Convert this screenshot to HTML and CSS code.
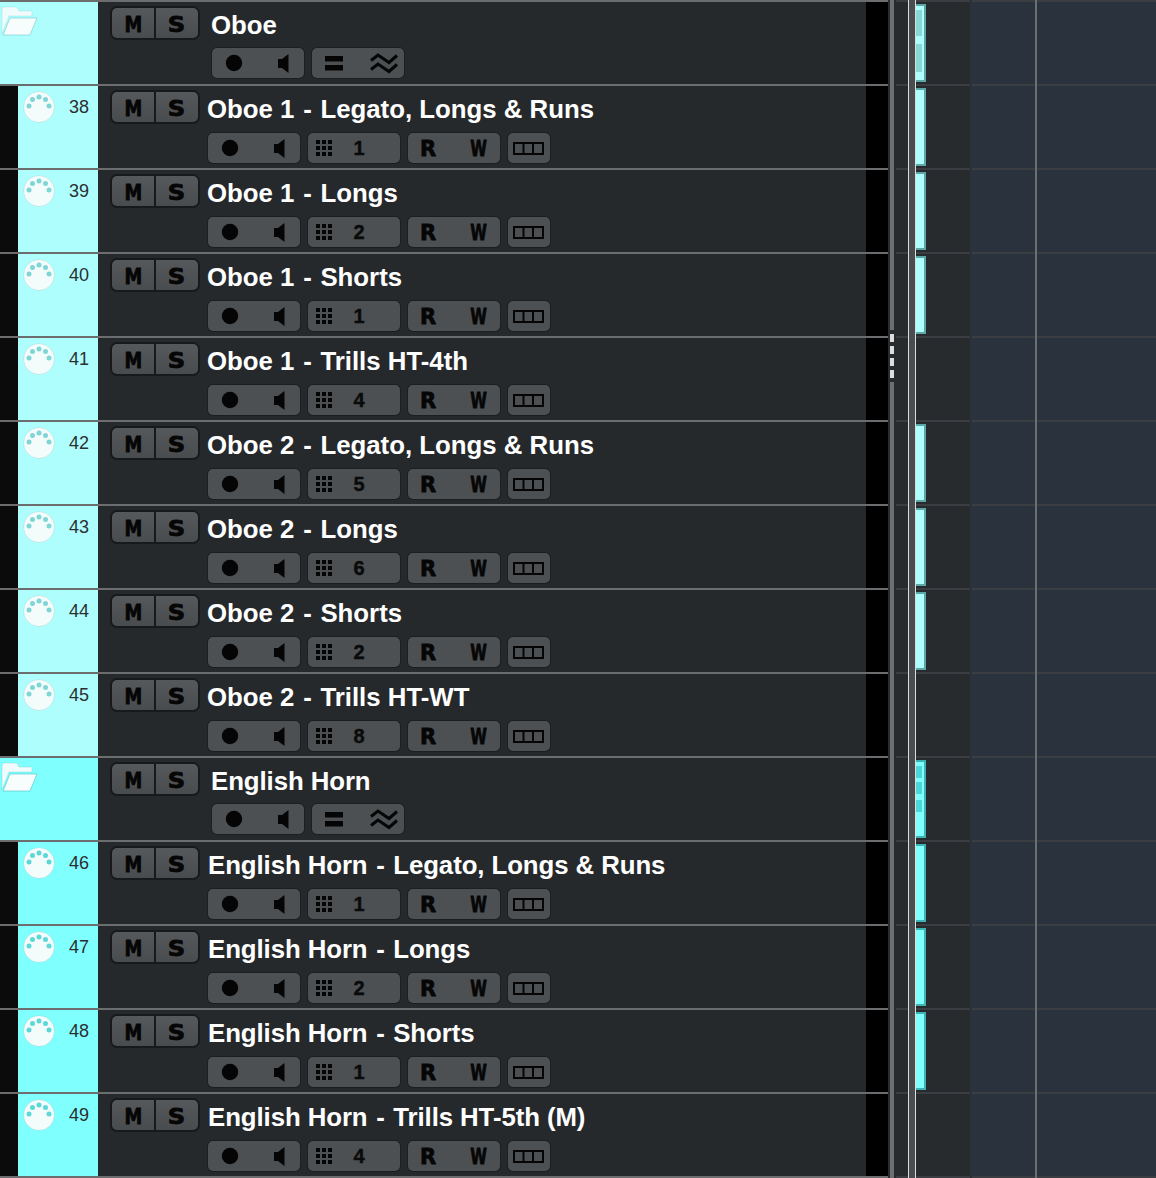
FILE: index.html
```html
<!DOCTYPE html>
<html lang="en">
<head>
    <meta charset="UTF-8">
    <title>Tracks</title>
    <link rel="stylesheet" href="styles.css">
</head>
<body>
    <svg class="icon-defs" width="0" height="0">
        <symbol id="i-rec" viewBox="0 0 18 18"><circle cx="9" cy="9" r="8.2"/></symbol>
        <symbol id="i-spk" viewBox="0 0 11 19"><path d="M0 5h4l6.500-5v19l-6.500-5H0z"/></symbol>
        <symbol id="i-grid" viewBox="0 0 16 16"><path d="M0 0h4v4H0zM6 0h4v4H6zM12 0h4v4h-4zM0 6h4v4H0zM6 6h4v4H6zM12 6h4v4h-4zM0 12h4v4H0zM6 12h4v4H6zM12 12h4v4h-4z"/></symbol>
        <symbol id="i-bars" viewBox="0 0 18 15"><path d="M0 0h18v5.500H0zM0 9h18v5.500H0z"/></symbol>
        <symbol id="i-wave" viewBox="0 0 28 22"><path class="wave" d="M1 8.500 8 3l11 7.500L27 3.500M1 17.500 8 12l11 7.500 8-7"/></symbol>
        <symbol id="i-cells" viewBox="0 0 31 13"><path class="cells" d="M1 1h29v11H1zM10.500 1v11M20 1v11"/></symbol>
        <symbol id="i-folder" viewBox="0 6 40 32">
            <path class="folder-back" d="M3 7h14l2 4h13v5H9L2 34V10z"/>
            <path class="folder-front" d="M10 18h27l-7 17H3z"/>
        </symbol>
        <symbol id="i-midi" viewBox="0 0 32 32">
            <circle class="midi-body" cx="16" cy="16" r="15.500"/>
            <circle class="midi-pin" cx="6" cy="15" r="2.500"/>
            <circle class="midi-pin" cx="9.500" cy="8.500" r="2.500"/>
            <circle class="midi-pin" cx="16" cy="6" r="2.500"/>
            <circle class="midi-pin" cx="22.500" cy="8.500" r="2.500"/>
            <circle class="midi-pin" cx="26" cy="15" r="2.500"/>
        </symbol>
    </svg>

    <div class="page">
        <div class="tracks">
            <!-- Oboe folder -->
            <div class="track folder pale">
                <div class="tint"><svg class="folder-icon"><use href="#i-folder"/></svg></div>
                <div class="controls">
                    <div class="top"><div class="ms"><span class="ms-btn"><b>M</b></span><span class="ms-btn"><b>S</b></span></div><div class="name">Oboe</div></div>
                    <div class="bottom"><div class="btn"><svg class="rec"><use href="#i-rec"/></svg><svg class="spk"><use href="#i-spk"/></svg></div><div class="btn"><svg class="bars"><use href="#i-bars"/></svg><svg class="wv"><use href="#i-wave"/></svg></div></div>
                </div>
                <div class="gutter"></div>
            </div>

            <div class="track pale">
                <div class="indent"></div>
                <div class="tint"><svg class="midi"><use href="#i-midi"/></svg><span class="num">38</span></div>
                <div class="controls">
                    <div class="top"><div class="ms"><span class="ms-btn"><b>M</b></span><span class="ms-btn"><b>S</b></span></div><div class="name">Oboe 1 <span class="dash">-</span> Legato, Longs &amp; Runs</div></div>
                    <div class="bottom"><div class="btn"><svg class="rec"><use href="#i-rec"/></svg><svg class="spk"><use href="#i-spk"/></svg></div><div class="btn chan"><svg class="grid"><use href="#i-grid"/></svg><span class="chan-no">1</span></div><div class="btn rw"><b>R</b><b>W</b></div><div class="btn small"><svg class="cells-icon"><use href="#i-cells"/></svg></div></div>
                </div>
                <div class="gutter"></div>
            </div>
            <div class="track pale">
                <div class="indent"></div>
                <div class="tint"><svg class="midi"><use href="#i-midi"/></svg><span class="num">39</span></div>
                <div class="controls">
                    <div class="top"><div class="ms"><span class="ms-btn"><b>M</b></span><span class="ms-btn"><b>S</b></span></div><div class="name">Oboe 1 <span class="dash">-</span> Longs</div></div>
                    <div class="bottom"><div class="btn"><svg class="rec"><use href="#i-rec"/></svg><svg class="spk"><use href="#i-spk"/></svg></div><div class="btn chan"><svg class="grid"><use href="#i-grid"/></svg><span class="chan-no">2</span></div><div class="btn rw"><b>R</b><b>W</b></div><div class="btn small"><svg class="cells-icon"><use href="#i-cells"/></svg></div></div>
                </div>
                <div class="gutter"></div>
            </div>
            <div class="track pale">
                <div class="indent"></div>
                <div class="tint"><svg class="midi"><use href="#i-midi"/></svg><span class="num">40</span></div>
                <div class="controls">
                    <div class="top"><div class="ms"><span class="ms-btn"><b>M</b></span><span class="ms-btn"><b>S</b></span></div><div class="name">Oboe 1 <span class="dash">-</span> Shorts</div></div>
                    <div class="bottom"><div class="btn"><svg class="rec"><use href="#i-rec"/></svg><svg class="spk"><use href="#i-spk"/></svg></div><div class="btn chan"><svg class="grid"><use href="#i-grid"/></svg><span class="chan-no">1</span></div><div class="btn rw"><b>R</b><b>W</b></div><div class="btn small"><svg class="cells-icon"><use href="#i-cells"/></svg></div></div>
                </div>
                <div class="gutter"></div>
            </div>
            <div class="track pale">
                <div class="indent"></div>
                <div class="tint"><svg class="midi"><use href="#i-midi"/></svg><span class="num">41</span></div>
                <div class="controls">
                    <div class="top"><div class="ms"><span class="ms-btn"><b>M</b></span><span class="ms-btn"><b>S</b></span></div><div class="name">Oboe 1 <span class="dash">-</span> Trills HT-4th</div></div>
                    <div class="bottom"><div class="btn"><svg class="rec"><use href="#i-rec"/></svg><svg class="spk"><use href="#i-spk"/></svg></div><div class="btn chan"><svg class="grid"><use href="#i-grid"/></svg><span class="chan-no">4</span></div><div class="btn rw"><b>R</b><b>W</b></div><div class="btn small"><svg class="cells-icon"><use href="#i-cells"/></svg></div></div>
                </div>
                <div class="gutter"></div>
            </div>
            <div class="track pale">
                <div class="indent"></div>
                <div class="tint"><svg class="midi"><use href="#i-midi"/></svg><span class="num">42</span></div>
                <div class="controls">
                    <div class="top"><div class="ms"><span class="ms-btn"><b>M</b></span><span class="ms-btn"><b>S</b></span></div><div class="name">Oboe 2 <span class="dash">-</span> Legato, Longs &amp; Runs</div></div>
                    <div class="bottom"><div class="btn"><svg class="rec"><use href="#i-rec"/></svg><svg class="spk"><use href="#i-spk"/></svg></div><div class="btn chan"><svg class="grid"><use href="#i-grid"/></svg><span class="chan-no">5</span></div><div class="btn rw"><b>R</b><b>W</b></div><div class="btn small"><svg class="cells-icon"><use href="#i-cells"/></svg></div></div>
                </div>
                <div class="gutter"></div>
            </div>
            <div class="track pale">
                <div class="indent"></div>
                <div class="tint"><svg class="midi"><use href="#i-midi"/></svg><span class="num">43</span></div>
                <div class="controls">
                    <div class="top"><div class="ms"><span class="ms-btn"><b>M</b></span><span class="ms-btn"><b>S</b></span></div><div class="name">Oboe 2 <span class="dash">-</span> Longs</div></div>
                    <div class="bottom"><div class="btn"><svg class="rec"><use href="#i-rec"/></svg><svg class="spk"><use href="#i-spk"/></svg></div><div class="btn chan"><svg class="grid"><use href="#i-grid"/></svg><span class="chan-no">6</span></div><div class="btn rw"><b>R</b><b>W</b></div><div class="btn small"><svg class="cells-icon"><use href="#i-cells"/></svg></div></div>
                </div>
                <div class="gutter"></div>
            </div>
            <div class="track pale">
                <div class="indent"></div>
                <div class="tint"><svg class="midi"><use href="#i-midi"/></svg><span class="num">44</span></div>
                <div class="controls">
                    <div class="top"><div class="ms"><span class="ms-btn"><b>M</b></span><span class="ms-btn"><b>S</b></span></div><div class="name">Oboe 2 <span class="dash">-</span> Shorts</div></div>
                    <div class="bottom"><div class="btn"><svg class="rec"><use href="#i-rec"/></svg><svg class="spk"><use href="#i-spk"/></svg></div><div class="btn chan"><svg class="grid"><use href="#i-grid"/></svg><span class="chan-no">2</span></div><div class="btn rw"><b>R</b><b>W</b></div><div class="btn small"><svg class="cells-icon"><use href="#i-cells"/></svg></div></div>
                </div>
                <div class="gutter"></div>
            </div>
            <div class="track pale">
                <div class="indent"></div>
                <div class="tint"><svg class="midi"><use href="#i-midi"/></svg><span class="num">45</span></div>
                <div class="controls">
                    <div class="top"><div class="ms"><span class="ms-btn"><b>M</b></span><span class="ms-btn"><b>S</b></span></div><div class="name">Oboe 2 <span class="dash">-</span> Trills HT-WT</div></div>
                    <div class="bottom"><div class="btn"><svg class="rec"><use href="#i-rec"/></svg><svg class="spk"><use href="#i-spk"/></svg></div><div class="btn chan"><svg class="grid"><use href="#i-grid"/></svg><span class="chan-no">8</span></div><div class="btn rw"><b>R</b><b>W</b></div><div class="btn small"><svg class="cells-icon"><use href="#i-cells"/></svg></div></div>
                </div>
                <div class="gutter"></div>
            </div>

            <!-- English Horn folder -->
            <div class="track folder vivid">
                <div class="tint"><svg class="folder-icon"><use href="#i-folder"/></svg></div>
                <div class="controls">
                    <div class="top"><div class="ms"><span class="ms-btn"><b>M</b></span><span class="ms-btn"><b>S</b></span></div><div class="name">English Horn</div></div>
                    <div class="bottom"><div class="btn"><svg class="rec"><use href="#i-rec"/></svg><svg class="spk"><use href="#i-spk"/></svg></div><div class="btn"><svg class="bars"><use href="#i-bars"/></svg><svg class="wv"><use href="#i-wave"/></svg></div></div>
                </div>
                <div class="gutter"></div>
            </div>

            <div class="track vivid">
                <div class="indent"></div>
                <div class="tint"><svg class="midi"><use href="#i-midi"/></svg><span class="num">46</span></div>
                <div class="controls">
                    <div class="top"><div class="ms"><span class="ms-btn"><b>M</b></span><span class="ms-btn"><b>S</b></span></div><div class="name">English Horn <span class="dash">-</span> Legato, Longs &amp; Runs</div></div>
                    <div class="bottom"><div class="btn"><svg class="rec"><use href="#i-rec"/></svg><svg class="spk"><use href="#i-spk"/></svg></div><div class="btn chan"><svg class="grid"><use href="#i-grid"/></svg><span class="chan-no">1</span></div><div class="btn rw"><b>R</b><b>W</b></div><div class="btn small"><svg class="cells-icon"><use href="#i-cells"/></svg></div></div>
                </div>
                <div class="gutter"></div>
            </div>
            <div class="track vivid">
                <div class="indent"></div>
                <div class="tint"><svg class="midi"><use href="#i-midi"/></svg><span class="num">47</span></div>
                <div class="controls">
                    <div class="top"><div class="ms"><span class="ms-btn"><b>M</b></span><span class="ms-btn"><b>S</b></span></div><div class="name">English Horn <span class="dash">-</span> Longs</div></div>
                    <div class="bottom"><div class="btn"><svg class="rec"><use href="#i-rec"/></svg><svg class="spk"><use href="#i-spk"/></svg></div><div class="btn chan"><svg class="grid"><use href="#i-grid"/></svg><span class="chan-no">2</span></div><div class="btn rw"><b>R</b><b>W</b></div><div class="btn small"><svg class="cells-icon"><use href="#i-cells"/></svg></div></div>
                </div>
                <div class="gutter"></div>
            </div>
            <div class="track vivid">
                <div class="indent"></div>
                <div class="tint"><svg class="midi"><use href="#i-midi"/></svg><span class="num">48</span></div>
                <div class="controls">
                    <div class="top"><div class="ms"><span class="ms-btn"><b>M</b></span><span class="ms-btn"><b>S</b></span></div><div class="name">English Horn <span class="dash">-</span> Shorts</div></div>
                    <div class="bottom"><div class="btn"><svg class="rec"><use href="#i-rec"/></svg><svg class="spk"><use href="#i-spk"/></svg></div><div class="btn chan"><svg class="grid"><use href="#i-grid"/></svg><span class="chan-no">1</span></div><div class="btn rw"><b>R</b><b>W</b></div><div class="btn small"><svg class="cells-icon"><use href="#i-cells"/></svg></div></div>
                </div>
                <div class="gutter"></div>
            </div>
            <div class="track vivid">
                <div class="indent"></div>
                <div class="tint"><svg class="midi"><use href="#i-midi"/></svg><span class="num">49</span></div>
                <div class="controls">
                    <div class="top"><div class="ms"><span class="ms-btn"><b>M</b></span><span class="ms-btn"><b>S</b></span></div><div class="name">English Horn <span class="dash">-</span> Trills HT-5th (M)</div></div>
                    <div class="bottom"><div class="btn"><svg class="rec"><use href="#i-rec"/></svg><svg class="spk"><use href="#i-spk"/></svg></div><div class="btn chan"><svg class="grid"><use href="#i-grid"/></svg><span class="chan-no">4</span></div><div class="btn rw"><b>R</b><b>W</b></div><div class="btn small"><svg class="cells-icon"><use href="#i-cells"/></svg></div></div>
                </div>
                <div class="gutter"></div>
            </div>
            <div class="track-end"></div>
        </div>

        <div class="splitter">
            <div class="grip"><i></i><i></i><i></i><i></i></div>
        </div>

        <div class="lanes">
            <div class="lane"><div class="event pale-event"><i class="patch p1"></i><i class="patch p2"></i></div></div>
            <div class="lane"><div class="event pale-event"></div></div>
            <div class="lane"><div class="event pale-event"></div></div>
            <div class="lane"><div class="event pale-event"></div></div>
            <div class="lane"></div>
            <div class="lane"><div class="event pale-event"></div></div>
            <div class="lane"><div class="event pale-event"></div></div>
            <div class="lane"><div class="event pale-event"></div></div>
            <div class="lane"></div>
            <div class="lane"><div class="event vivid-event"><i class="patch p3"></i><i class="patch p4"></i><i class="patch p5"></i></div></div>
            <div class="lane"><div class="event vivid-event"></div></div>
            <div class="lane"><div class="event vivid-event"></div></div>
            <div class="lane"><div class="event vivid-event"></div></div>
            <div class="lane"></div>
            <div class="lane lane-end"></div>

            <div class="cursor-band"></div>
            <div class="cursor c1"></div>
            <div class="cursor c2"></div>
            <div class="bar-line"></div>
        </div>
    </div>
</body>
</html>
```

FILE: styles.css
```css
/* General */
body {
    margin: 0;
    height: 1178px;
    overflow: hidden;
    background: #292c2e;
    font-family: "Liberation Sans", Arial, sans-serif;
}

.icon-defs {
    position: absolute;
}

.page {
    display: flex;
    height: 1178px;
}

/* Track list */
.tracks {
    width: 888px;
    flex: none;
}

.track {
    display: flex;
    height: 82px;
    border-top: 2px solid #6b6d6f;
}

.track-end {
    height: 2px;
    background: #6b6d6f;
}

.indent {
    width: 18px;
    flex: none;
    background: #0b0b0b;
}

.tint {
    position: relative;
    width: 80px;
    flex: none;
}

.folder .tint {
    width: 98px;
}

.pale .tint {
    background: #aefefe;
    --pin: #80d6d6;
    --edge: #6fc4c4;
}

.vivid .tint {
    background: #80ffff;
    --pin: #5cd8d8;
    --edge: #44bcbc;
}

.gutter {
    width: 22px;
    flex: none;
    background: #000;
}

.midi {
    position: absolute;
    left: 5px;
    top: 5px;
    width: 32px;
    height: 32px;
    overflow: visible;
}

.midi-body {
    fill: #f4fbfb;
    stroke: var(--edge);
    stroke-opacity: 0.35;
    stroke-width: 0.8px;
}

.midi-pin {
    fill: var(--pin);
}

.num {
    position: absolute;
    right: 9px;
    top: 11px;
    font-size: 18px;
    line-height: 20px;
    color: #2c2f31;
}

.folder-icon {
    position: absolute;
    left: 0;
    top: 4px;
    width: 40px;
    height: 32px;
}

.folder-back {
    fill: #f2fbfb;
    stroke: var(--edge);
    stroke-opacity: 0.4;
    stroke-width: 0.6px;
}

.folder-front {
    fill: #f7fdfd;
    stroke: var(--edge);
    stroke-opacity: 0.7;
    stroke-width: 0.8px;
}

/* Controls */
.controls {
    flex: 1;
    min-width: 0;
    background: #26292c;
    padding: 4px 0 0 12px;
}

.top {
    display: flex;
    align-items: center;
    height: 34px;
}

.ms {
    display: flex;
    gap: 2px;
    width: 90px;
    height: 34px;
    box-sizing: border-box;
    padding: 2px;
    background: #17191b;
    border-radius: 7px;
}

.ms-btn {
    flex: 1;
    display: flex;
    align-items: center;
    justify-content: center;
    overflow: hidden;
    background: linear-gradient(#56595c, #494c4f);
    border-radius: 5px 0 0 5px;
}

.ms-btn + .ms-btn {
    border-radius: 0 5px 5px 0;
}

.ms-btn b,
.rw b {
    display: inline-block;
    font-family: "DejaVu Sans", sans-serif;
    font-size: 21px;
    font-weight: bold;
    line-height: 22px;
    color: #060606;
    -webkit-text-stroke: 0.8px #060606;
}

.ms-btn:first-child b {
    transform: translateY(2px) scaleX(0.85);
}

.ms-btn + .ms-btn b {
    transform: translateY(2px) scaleX(1.15);
}

.name {
    margin: 4px 0 0 7px;
    font-size: 25.800px;
    font-weight: bold;
    line-height: 34px;
    color: #fff;
    white-space: nowrap;
}

.vivid .name {
    margin-left: 8px;
    letter-spacing: -0.080px;
}

.folder .name {
    margin-left: 11px;
}

.dash {
    margin: 0 1.500px;
}

.bottom {
    display: flex;
    gap: 8px;
    margin: 9px 0 0 98px;
}

.folder .bottom {
    margin: 8px 0 0 102px;
}

.btn {
    display: flex;
    align-items: center;
    justify-content: space-between;
    width: 92px;
    height: 30px;
    box-sizing: border-box;
    padding: 0 15px 0 13px;
    background: #4c5053;
    border-radius: 5px;
    box-shadow: 0 0 0 1px #1c1e20;
}

.btn svg {
    fill: #050505;
    flex: none;
}

.rec {
    width: 18px;
    height: 18px;
}

.spk {
    width: 11px;
    height: 19px;
}

.bars {
    width: 18px;
    height: 15px;
}

.wv {
    width: 28px;
    height: 22px;
    margin-right: -9px;
}

.wave {
    fill: none;
    stroke: #050505;
    stroke-width: 3px;
}

.chan {
    justify-content: flex-start;
    padding: 0 0 0 8px;
}

.grid {
    width: 16px;
    height: 16px;
}

.chan-no {
    margin-left: 18px;
    width: 18px;
    text-align: center;
    font-size: 20px;
    font-weight: bold;
    color: #0a0a0a;
    -webkit-text-stroke: 0.4px #0a0a0a;
}

.rw {
    padding: 0 10px 0 12px;
}

.rw b:first-child {
    transform: translateY(1px);
}

.rw b:last-child {
    transform: translateY(1px) scaleX(0.72);
}

.small {
    width: 42px;
    padding: 0 5px;
}

.cells-icon {
    width: 31px;
    height: 13px;
}

.cells {
    fill: none;
    stroke: #050505;
    stroke-width: 2px;
}

/* Splitter */
.splitter {
    position: relative;
    width: 4px;
    margin: 0 0 0 2px;
    flex: none;
    background: #6d6f71;
}

.grip {
    position: absolute;
    left: 0;
    top: 330px;
    display: flex;
    flex-direction: column;
    gap: 4px;
    width: 4px;
    padding: 4px 0;
    background: #292c2e;
}

.grip i {
    display: block;
    height: 8px;
    background: #dddddd;
}

/* Arrange lanes */
.lanes {
    position: relative;
    flex: 1;
    background: linear-gradient(90deg, #282b2d 76px, #29323d 76px);
}

.lane {
    position: relative;
    height: 84px;
    box-sizing: border-box;
    border-top: 2px solid #3a3e42;
    margin-left: 2px;
}

.lane::after {
    content: "";
    position: absolute;
    left: 74px;
    top: -2px;
    width: 2px;
    height: 2px;
    background: #2a2e33;
}

.lane-end {
    height: 2px;
}

.event {
    position: absolute;
    left: 19px;
    top: 2px;
    width: 9px;
    height: 74px;
    border-style: solid;
    border-width: 2px 2px 2px 0;
}

.pale-event {
    background: #aefefe;
    border-color: #5ca8a8;
}

.vivid-event {
    background: #80ffff;
    border-color: #3cb4b4;
}

.patch {
    position: absolute;
    left: 1px;
    width: 6px;
}

.p1 {
    top: 4px;
    height: 26px;
    background: #88d8d4;
}

.p2 {
    top: 38px;
    height: 28px;
    background: #88d8d4;
}

.p3 {
    top: 4px;
    height: 12px;
    background: #4cd8d8;
}

.p4 {
    top: 20px;
    height: 12px;
    background: #4cd8d8;
}

.p5 {
    top: 38px;
    height: 12px;
    background: #4cd8d8;
}

/* Lines over the lanes */
.cursor-band {
    position: absolute;
    top: 0;
    left: 15px;
    width: 6px;
    height: 100%;
    background: #4a4d4f;
}

.cursor {
    position: absolute;
    top: 0;
    width: 1px;
    height: 100%;
    background: #dcdcdc;
}

.c1 {
    left: 14px;
}

.c2 {
    left: 21px;
}

.bar-line {
    position: absolute;
    top: 0;
    left: 141px;
    width: 2px;
    height: 100%;
    background: #6a6f74;
}
```
